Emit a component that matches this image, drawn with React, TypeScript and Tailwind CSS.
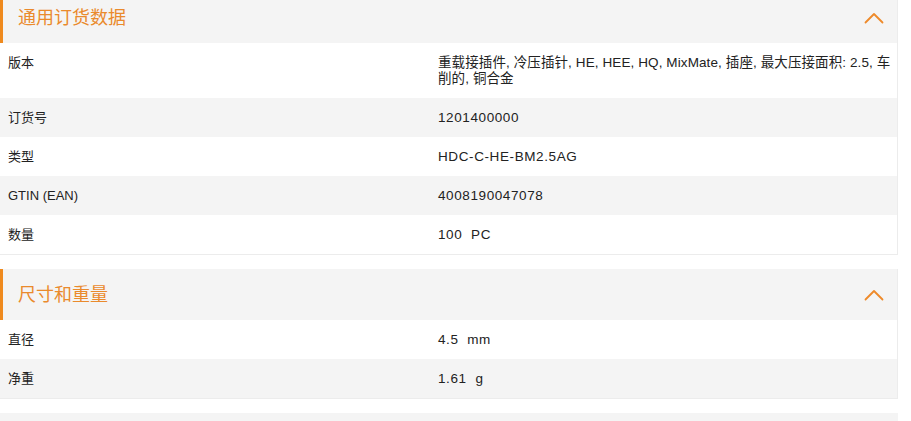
import React from "react";

interface Row {
  label: string;
  value: string;
  multi?: boolean;
}

interface Section {
  title: string;
  rows: Row[];
}

const sections: Section[] = [
  {
    title: "通用订货数据",
    rows: [
      {
        label: "版本",
        value:
          "重载接插件, 冷压插针, HE, HEE, HQ, MixMate, 插座, 最大压接面积: 2.5, 车\n削的, 铜合金",
        multi: true,
      },
      { label: "订货号", value: "1201400000" },
      { label: "类型", value: "HDC-C-HE-BM2.5AG" },
      { label: "GTIN (EAN)", value: "4008190047078" },
      { label: "数量", value: "100  PC" },
    ],
  },
  {
    title: "尺寸和重量",
    rows: [
      { label: "直径", value: "4.5  mm" },
      { label: "净重", value: "1.61  g" },
    ],
  },
];

const Chevron: React.FC = () => (
  <svg width="20" height="12" viewBox="0 0 20 12" fill="none">
    <path
      d="M1.5 10.5 L10 2 L18.5 10.5"
      stroke="#ee8a2a"
      strokeWidth="1.8"
      strokeLinecap="round"
      strokeLinejoin="round"
    />
  </svg>
);

const App: React.FC = () => {
  return (
    <div
      className="w-[911px] h-[421px] overflow-hidden bg-white"
      style={{ fontFamily: '"Liberation Sans", Arial, "Noto Sans CJK SC", sans-serif' }}
    >
      <div className="-mt-2 w-[898px]">
        {sections.map((section, si) => (
          <div key={si} className="mb-[14px] border-r border-b border-[#ececec]">
            <div className="flex h-[51px] items-center justify-between border-l-[3px] border-[#ef8a1e] bg-[#f4f4f4] pl-[15px] pr-[13px]">
              <h2 className="pt-[2px] text-[18px] font-normal text-[#ea8a2c]">{section.title}</h2>
              <Chevron />
            </div>
            {section.rows.map((row, ri) => (
              <div
                key={ri}
                className={`flex text-[#222] ${row.multi ? "leading-[15.5px]" : "leading-[15px]"} ${
                  ri % 2 === 0 ? "bg-white" : "bg-[#f4f4f4]"
                }`}
              >
                <div className="w-[430px] shrink-0 px-2 py-3 text-[13px]">{row.label}</div>
                <div
                  className={`min-w-0 flex-1 py-3 pl-2 pr-[8px] text-[13.5px] ${
                    row.multi ? "whitespace-pre tracking-[0.1px]" : "whitespace-pre-wrap tracking-[0.6px]"
                  }`}
                >
                  {row.value}
                </div>
              </div>
            ))}
          </div>
        ))}
        {/* next (collapsed) section, cut off by the viewport */}
        <div className="h-[51px] bg-[#f4f4f4]" />
      </div>
    </div>
  );
};

export default App;
